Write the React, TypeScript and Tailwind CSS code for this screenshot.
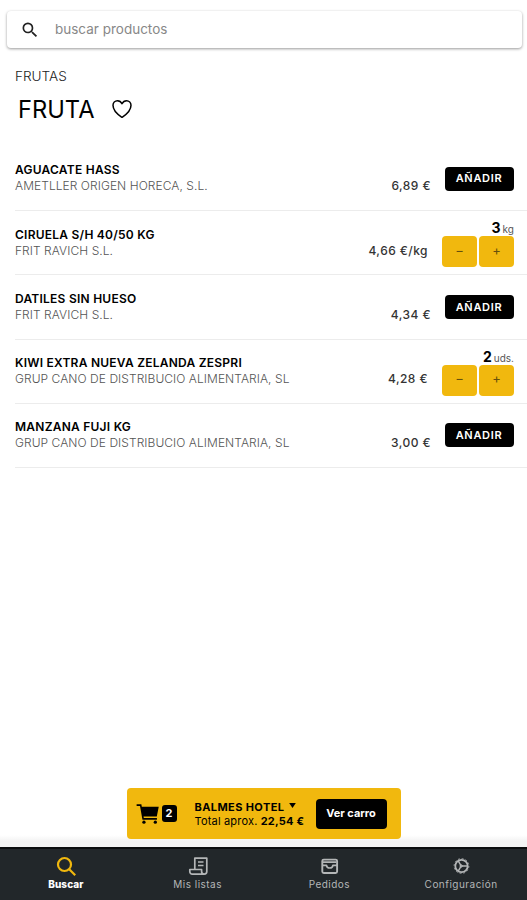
import type { ReactNode } from 'react'
import { IoCartSharp, IoHeartOutline } from 'react-icons/io5'
import { MdSearch } from 'react-icons/md'
import clsx from 'clsx'

// ── data ───────────────────────────────────────────────────────────────────

interface Product {
  name: string
  supplier: string
  price: string
  quantity?: number
  unit?: string
}

const PRODUCTS: Product[] = [
  { name: 'AGUACATE HASS', supplier: 'AMETLLER ORIGEN HORECA, S.L.', price: '6,89 €' },
  { name: 'CIRUELA S/H 40/50 KG', supplier: 'FRIT RAVICH S.L.', price: '4,66 €/kg', quantity: 3, unit: 'kg' },
  { name: 'DATILES SIN HUESO', supplier: 'FRIT RAVICH S.L.', price: '4,34 €' },
  { name: 'KIWI EXTRA NUEVA ZELANDA ZESPRI', supplier: 'GRUP CANO DE DISTRIBUCIO ALIMENTARIA, SL', price: '4,28 €', quantity: 2, unit: 'uds.' },
  { name: 'MANZANA FUJI KG', supplier: 'GRUP CANO DE DISTRIBUCIO ALIMENTARIA, SL', price: '3,00 €' },
]

// ── product list ───────────────────────────────────────────────────────────

function Stepper({ quantity, unit }: { quantity: number; unit?: string }) {
  return (
    <div className="w-[72px] shrink-0 pt-[9px]">
      <div className="flex h-4 items-baseline justify-end gap-[2px] leading-4">
        <span className="text-[14px] font-bold">{quantity}</span>
        <span className="text-[10px] text-[#555]">{unit}</span>
      </div>
      <div className="flex gap-[2px]">
        <button className="h-[31px] w-[35px] rounded-[4px] bg-[#f1b80e] pb-[2px] text-[13px] text-[#66500c]">−</button>
        <button className="h-[31px] w-[35px] rounded-[4px] bg-[#f1b80e] pb-[2px] text-[13px] text-[#66500c]">+</button>
      </div>
    </div>
  )
}

function ProductRow({ product }: { product: Product }) {
  const inCart = product.quantity !== undefined
  return (
    <li className="flex h-[64.2px] border-b border-[#ececec] pr-[13px]">
      <div className="min-w-0 flex-1 pt-[15.4px] leading-4 whitespace-nowrap">
        <div className="text-[12px] font-semibold tracking-[0.24px] text-black">{product.name}</div>
        <div className="text-[12px] font-light tracking-[0.06px] text-[#555]">{product.supplier}</div>
      </div>
      <div className={clsx('pt-[31.4px] text-[12px] leading-4 font-medium tracking-[0.45px] text-[#333]', inCart ? 'pr-[14px]' : 'pr-[14px]')}>
        {product.price}
      </div>
      {product.quantity !== undefined ? (
        <Stepper quantity={product.quantity} unit={product.unit} />
      ) : (
        <button className="mt-[19.6px] h-6 w-[69px] shrink-0 rounded-[4px] bg-black pr-px text-[11px] font-semibold tracking-[0.7px] text-white">
          AÑADIR
        </button>
      )}
    </li>
  )
}

// ── cart ───────────────────────────────────────────────────────────────────

function CartBar() {
  return (
    <div className="mx-auto flex h-[51px] w-[274px] items-center rounded-[4px] bg-[#f1b80e] pr-[14px] pl-[8px] text-black">
      <IoCartSharp className="h-[26px] w-[26px]" />
      <span className="ml-[1px] flex h-[17px] w-[15px] items-center justify-center rounded-[3px] bg-black text-[11px] font-bold text-white">2</span>
      <div className="ml-[18px] flex-1 leading-[14px] whitespace-nowrap">
        <div className="flex items-center gap-[5px] text-[11px] font-bold tracking-[0.4px]">
          BALMES HOTEL
          <svg viewBox="0 0 8 6" className="mb-[3px] h-[5px] w-[7px]"><path d="M0 0h8L4 6z" /></svg>
        </div>
        <div className="text-[11px] tracking-[0.18px]">
          Total aprox. <span className="font-bold">22,54 €</span>
        </div>
      </div>
      <button className="h-[30px] w-[71px] rounded-[4px] bg-black text-[11px] font-bold text-white">Ver carro</button>
    </div>
  )
}

// ── bottom navigation ──────────────────────────────────────────────────────

function NavItem({ label, active, children }: { label: string; active?: boolean; children: ReactNode }) {
  return (
    <a className={clsx('flex flex-1 flex-col items-center text-[10px] leading-[12px]', active ? 'font-extrabold tracking-[0.1px] text-white' : 'tracking-[0.48px] text-[#b4b6b7]')}>
      <svg
        viewBox="0 0 20 20"
        className={clsx('h-5 w-5', active && 'text-[#f1b80e]')}
        fill="none"
        stroke="currentColor"
        strokeWidth={active ? 2.2 : 1.7}
        strokeLinejoin="round"
      >
        {children}
      </svg>
      <span className="mt-[2px]">{label}</span>
    </a>
  )
}

function BottomNav() {
  return (
    <nav className="flex h-[53px] border-t-2 border-[#0b0d0e] bg-[#22272a] pt-[7px]">
      <NavItem label="Buscar" active>
        <circle cx="8.5" cy="8.5" r="6.5" />
        <path d="m13.2 13.2 6 6" />
      </NavItem>
      <NavItem label="Mis listas">
        <path d="M6.8 13.2V2.2h12v13.3a2.6 2.6 0 0 1-5.2 0v-2H1.8v2a2.5 2.5 0 0 0 2.5 2.6h12" />
        <path d="M10 6h5.5M10 9.5h5.5" />
      </NavItem>
      <NavItem label="Pedidos">
        <rect x="3.3" y="3.6" width="14.8" height="13.4" rx="1.5" strokeWidth="1.9" />
        <path d="M3.3 9.3h4.2c.4 3.6 6 3.6 6.4 0h4.2M4 6.2h13.4" />
      </NavItem>
      <NavItem label="Configuración">
        <circle cx="10.5" cy="10" r="6.2" strokeWidth="1.8" />
        <circle cx="10.5" cy="10" r="7.4" strokeWidth="0.8" strokeDasharray="1.95 1.92" />
        <path d="M10.2 10h6M10.2 10 7.2 4.8M10.2 10l-3 5.2" strokeWidth="1.5" />
        <circle cx="10.2" cy="10" r="1.2" strokeWidth="1" />
      </NavItem>
    </nav>
  )
}

// ── page ───────────────────────────────────────────────────────────────────

export default function App() {
  return (
    <div className="flex h-[900px] w-[527px] flex-col overflow-hidden bg-white font-['Inter',sans-serif] text-black">
      <label className="mr-[5px] ml-[7px] mt-[11px] flex h-[37px] shrink-0 items-center rounded-[4px] bg-white pl-[13px] shadow-[0_1px_3px_rgba(0,0,0,0.4)]">
        <MdSearch className="h-5 w-5 text-[#222]" />
        <input placeholder="buscar productos" className="ml-[15px] flex-1 text-[13.5px] outline-none placeholder:text-[#888]" />
      </label>

      <main className="flex-1 pl-[15px]">
        <div className="mt-[19px] text-[13.6px] leading-[18px] font-light text-[#222]">FRUTAS</div>
        <div className="mt-[10px] flex h-[30px] items-center pl-[3px]">
          <h1 className="text-[23.7px] leading-[30px]">FRUTA</h1>
          <IoHeartOutline className="mb-[2px] ml-[16px] h-6 w-6" />
        </div>
        <ul className="mt-[22px]">
          {PRODUCTS.map((p) => (
            <ProductRow key={p.name} product={p} />
          ))}
        </ul>
      </main>

      <div className="h-[59px] shrink-0 bg-linear-to-b from-white from-80% to-[#f3f3f3] to-90%">
        <CartBar />
      </div>
      <BottomNav />
    </div>
  )
}
